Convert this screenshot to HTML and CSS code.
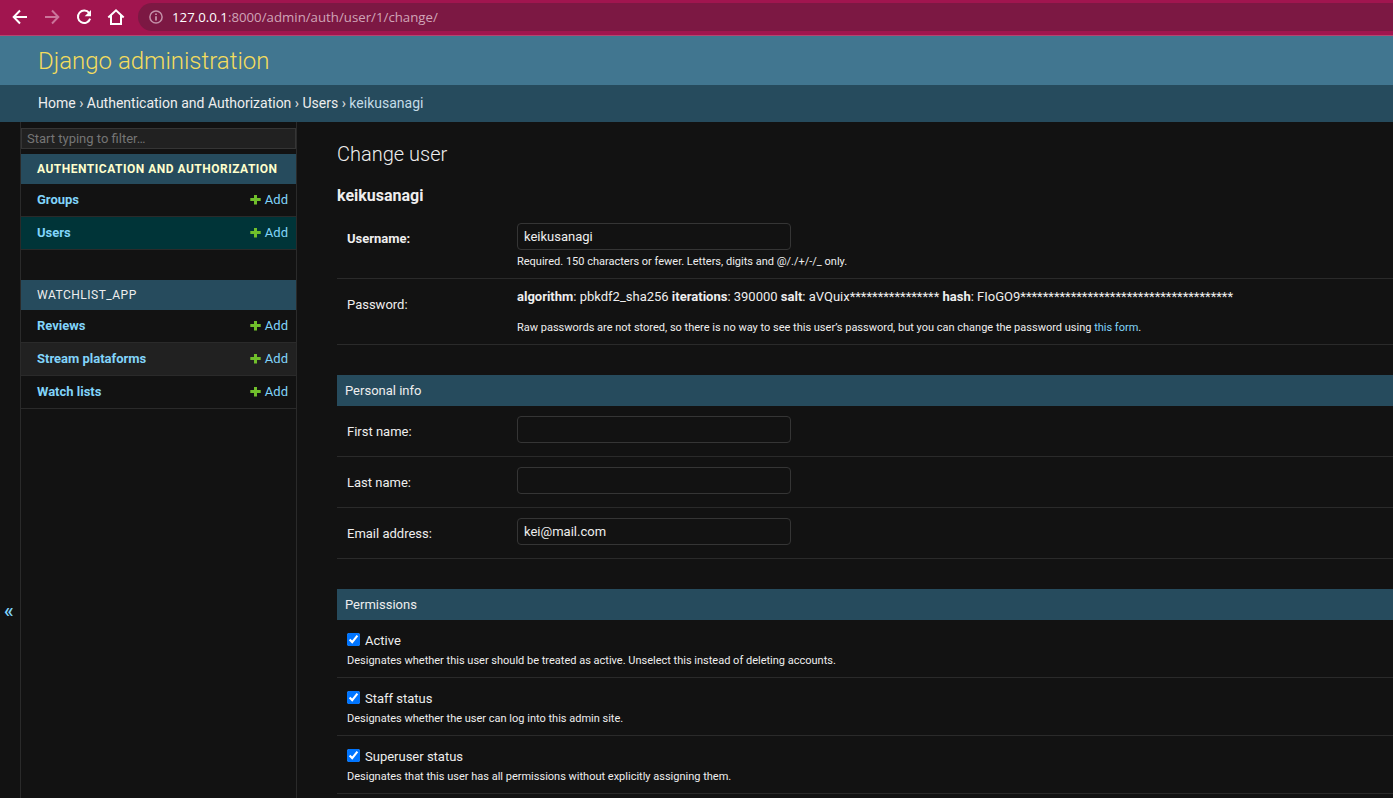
FILE: index.html
```html
<!DOCTYPE html>
<html lang="en">
<head>
<meta charset="utf-8">
<title>Change user | Django administration</title>
<link rel="stylesheet" href="styles.css">
</head>
<body>
<div class="browser-bar">
  <svg class="nav-icons" width="138" height="34" viewBox="0 0 138 34" fill="none" stroke="#fff" stroke-width="2">
    <path d="M27 17H14M20 10.5L13.7 17l6.3 6.5"/>
    <path class="disabled" d="M45 17h13M52 10.5l6.3 6.5-6.3 6.5"/>
    <path d="M89.2 13.2A6.2 6.2 0 1 0 90.1 18.6"/>
    <path d="M91 10v6.3h-6.3z" fill="#fff" stroke="none"/>
    <path d="M108.3 17.6l7.7-7.3 7.7 7.3M111 15.5V24h10v-8.5"/>
  </svg>
  <div class="address">
    <svg width="14" height="14" viewBox="0 0 14 14" fill="none" stroke="#c490a8" stroke-width="1.5"><circle cx="7" cy="7" r="6.1"/><path d="M7 6.2v4.3M7 3.4v1.7" stroke-width="1.8"/></svg>
    <span class="url"><span class="host">127.0.0.1</span>:8000/admin/auth/user/1/change/</span>
  </div>
</div>
<header class="header"><h1>Django administration</h1></header>
<nav class="breadcrumbs"><a>Home</a> › <a>Authentication and Authorization</a> › <a>Users</a> › <span class="current">keikusanagi</span></nav>
<div class="main">
  <div class="toggle"><span>«</span></div>
  <aside class="sidebar">
    <input class="filter" type="text" placeholder="Start typing to filter…">
    <section class="module">
      <h2 class="selected"><span>Authentication and Authorization</span></h2>
      <div class="model"><a class="name">Groups</a><a class="add"><svg width="11" height="11" viewBox="0 0 11 11"><path d="M4 1h3v3h3.7v3H7v3.5H4V7H.3V4H4z"/></svg>Add</a></div>
      <div class="model current-model"><a class="name">Users</a><a class="add"><svg width="11" height="11" viewBox="0 0 11 11"><path d="M4 1h3v3h3.7v3H7v3.5H4V7H.3V4H4z"/></svg>Add</a></div>
    </section>
    <section class="module">
      <h2><span>Watchlist_app</span></h2>
      <div class="model"><a class="name">Reviews</a><a class="add"><svg width="11" height="11" viewBox="0 0 11 11"><path d="M4 1h3v3h3.7v3H7v3.5H4V7H.3V4H4z"/></svg>Add</a></div>
      <div class="model alt"><a class="name">Stream plataforms</a><a class="add"><svg width="11" height="11" viewBox="0 0 11 11"><path d="M4 1h3v3h3.7v3H7v3.5H4V7H.3V4H4z"/></svg>Add</a></div>
      <div class="model"><a class="name">Watch lists</a><a class="add"><svg width="11" height="11" viewBox="0 0 11 11"><path d="M4 1h3v3h3.7v3H7v3.5H4V7H.3V4H4z"/></svg>Add</a></div>
    </section>
  </aside>
  <main class="content">
    <h1>Change user</h1>
    <h2>keikusanagi</h2>
    <fieldset>
      <div class="row username">
        <label class="required">Username:</label>
        <div><input class="text" type="text" value="keikusanagi"><p class="help">Required. 150 characters or fewer. Letters, digits and @/./+/-/_ only.</p></div>
      </div>
      <div class="row password">
        <label>Password:</label>
        <div><p class="hash"><b>algorithm</b>: pbkdf2_sha256 <b>iterations</b>: 390000 <b>salt</b>: aVQuix**************** <b>hash</b>: FIoGO9**************************************</p>
        <p class="help">Raw passwords are not stored, so there is no way to see this user’s password, but you can change the password using <a>this form</a>.</p></div>
      </div>
    </fieldset>
    <fieldset>
      <h3>Personal info</h3>
      <div class="row"><label>First name:</label><input class="text" type="text"></div>
      <div class="row"><label>Last name:</label><input class="text" type="text"></div>
      <div class="row"><label>Email address:</label><input class="text" type="text" value="kei@mail.com"></div>
    </fieldset>
    <fieldset>
      <h3>Permissions</h3>
      <div class="check"><label><input type="checkbox" checked>Active</label><p class="help">Designates whether this user should be treated as active. Unselect this instead of deleting accounts.</p></div>
      <div class="check"><label><input type="checkbox" checked>Staff status</label><p class="help">Designates whether the user can log into this admin site.</p></div>
      <div class="check"><label><input type="checkbox" checked>Superuser status</label><p class="help">Designates that this user has all permissions without explicitly assigning them.</p></div>
    </fieldset>
  </main>
</div>
</body>
</html>
```

FILE: styles.css
```css
* { box-sizing: border-box; }
body {
  margin: 0;
  height: 798px;
  overflow: hidden;
  display: flex;
  flex-direction: column;
  background: #121212;
  color: #eee;
  font: 13px/16px Roboto, "Liberation Sans", sans-serif;
}
h1, h2, h3, p, fieldset { margin: 0; padding: 0; border: 0; }
input { font-family: inherit; }

.browser-bar {
  flex: none;
  height: 36px;
  display: flex;
  background: #a1154f;
  border-bottom: 1px solid #b5446f;
}
.nav-icons { flex: none; }
.nav-icons .disabled { stroke: #cb749a; }
.address {
  flex: 1;
  height: 28px;
  margin-top: 3px;
  padding-left: 11px;
  display: flex;
  align-items: center;
  gap: 9px;
  border-radius: 14px 0 0 14px;
  background: #7c1843;
}
.url {
  color: #d0a4b7;
  font: 13.25px/20px "Open Sans", "Noto Sans", sans-serif;
  white-space: nowrap;
}
.host { color: #fff; }

.header {
  flex: none;
  height: 49px;
  padding-left: 38px;
  background: #417690;
}
.header h1 { color: #f5dd5d; font-size: 24px; font-weight: 300; line-height: 50px; }
.breadcrumbs {
  flex: none;
  height: 37px;
  padding-left: 38px;
  background: #264b5d;
  color: #e0e0e0;
  font-size: 14px;
  line-height: 36px;
}
.breadcrumbs a { color: #eee; }
.breadcrumbs .current { color: #c4dce8; }

.main { flex: 1; min-height: 0; display: flex; }
.toggle {
  flex: none;
  width: 21px;
  padding-top: 476px;
  padding-left: 4px;
  border-right: 1px solid #2a2a2a;
  color: #81d4fa;
  font-size: 20px;
  font-weight: 500;
  line-height: 24px;
}
.sidebar { flex: none; width: 276px; padding-top: 6px; border-right: 1px solid #2a2a2a; }
.filter {
  display: block;
  width: 275px;
  height: 21px;
  margin-bottom: 5px;
  padding: 0 5px;
  border: 1px solid #353535;
  background: #212121;
  color: #eee;
  font-size: 13px;
}
.filter::placeholder { color: #757575; }
.module { margin-bottom: 30px; }
.module h2 {
  height: 30px;
  padding-left: 16px;
  background: #264b5d;
  font-size: 12px;
  font-weight: 400;
  line-height: 30px;
  letter-spacing: .5px;
  text-transform: uppercase;
}
.module .selected { color: #ffffcc; font-weight: 700; }
.model {
  height: 33px;
  padding: 0 8px 1px 16px;
  display: flex;
  align-items: center;
  justify-content: space-between;
  border-bottom: 1px solid #2a2a2a;
  color: #81d4fa;
}
.name { font-weight: 700; }
.add { display: flex; align-items: center; gap: 4px; }
.add svg { fill: #70bf2b; }
.current-model { background: #003438; }
.alt { background: #212121; }

.content { flex: 1; min-width: 0; padding: 20px 0 0 40px; }
.content h1 { margin-bottom: 21px; font-size: 20px; font-weight: 300; line-height: 24px; }
.content h2 { margin-bottom: 8px; font-size: 16px; font-weight: 700; line-height: 18px; }
fieldset { min-width: 0; margin-bottom: 30px; }
.content h3 {
  height: 31px;
  padding-left: 8px;
  background: #264b5d;
  font-size: 13px;
  font-weight: 400;
  line-height: 31px;
}
.row {
  height: 51px;
  padding: 10px 10px 0;
  display: grid;
  grid-template-columns: 170px 1fr;
  align-items: start;
  border-bottom: 1px solid #2a2a2a;
  white-space: nowrap;
}
.row label { padding-top: 8px; }
.row .required { font-weight: 700; }
.username { height: 66px; }
.password { height: 66px; }
.text {
  display: block;
  width: 274px;
  height: 27px;
  padding: 0 6px;
  border: 1px solid #353535;
  border-radius: 4px;
  background: #121212;
  color: #eee;
  font-size: 13px;
}
.help { font-size: 11px; line-height: 14px; }
.username .help { margin-top: 5px; }
.password .help { margin-top: 16px; }
.help a { color: #81d4fa; }
.check { height: 58px; padding: 12px 10px 0; border-bottom: 1px solid #2a2a2a; }
.check label { display: flex; align-items: center; height: 17px; line-height: 17px; gap: 5px; }
.check input { width: 13px; height: 13px; margin: -2px 0 0; }
.check .help { margin-top: 5px; }
```
